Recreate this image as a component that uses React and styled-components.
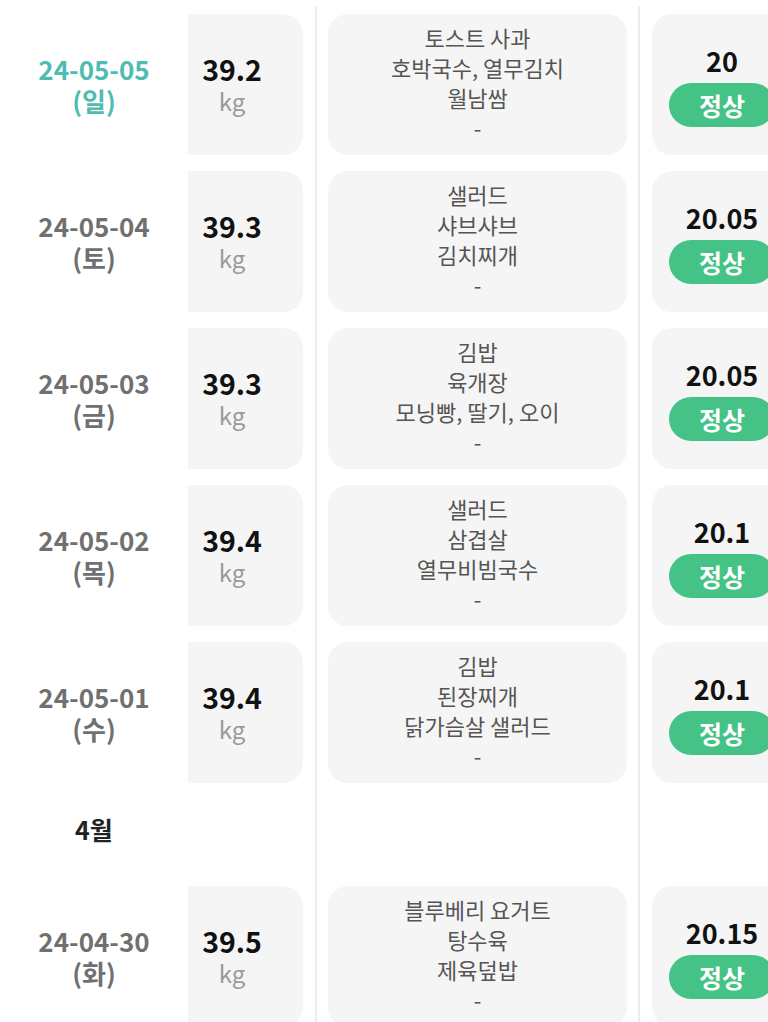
import React from "react";
import styled, { createGlobalStyle } from "styled-components";

const GlobalStyle = createGlobalStyle`
  html, body {
    margin: 0;
    padding: 0;
    background: #ffffff;
    overflow: hidden;
  }
  body {
    font-family: "Noto Sans CJK KR", "Noto Sans", sans-serif;
  }
`;

const List = styled.div`
  width: 792px;
  padding-top: 6px;
  display: flex;
  flex-direction: column;
`;

const Row = styled.div`
  display: grid;
  grid-template-columns: 188px 115px 12px 2px 11px 299px 11px 2px 12px 140px;
  grid-template-rows: 100%;
  height: ${(p) => p.$height || 157}px;
  & > * {
    grid-row: 1;
  }
`;

const Divider = styled.div`
  grid-column: ${(p) => p.$col};
  background: #ededed;
`;

const DateCell = styled.div`
  grid-column: 1;
  display: flex;
  flex-direction: column;
  align-items: center;
  justify-content: center;
  font-size: 26px;
  font-weight: 700;
  line-height: 32px;
  color: ${(p) => (p.$today ? "#4fbcb3" : "#707070")};
`;

const MonthLabel = styled.div`
  grid-column: 1;
  display: flex;
  align-items: center;
  justify-content: center;
  padding-bottom: 12px;
  font-size: 25px;
  font-weight: 700;
  color: #222222;
`;

const Card = styled.div`
  grid-column: ${(p) => p.$col};
  margin: 8px 0;
  background: #f5f5f5;
  border-radius: ${(p) => (p.$flatLeft ? "0 20px 20px 0" : "20px")};
  display: flex;
  flex-direction: column;
  align-items: center;
  justify-content: center;
`;

const WeightCard = styled(Card)`
  padding-right: 27px;
`;

const MealCard = styled(Card)`
  padding-bottom: 6px;
`;

const WeightValue = styled.div`
  font-size: 28.5px;
  font-weight: 700;
  line-height: 32px;
  color: #111111;
`;

const Unit = styled.div`
  font-size: 24px;
  line-height: 32px;
  color: #9a9a9a;
`;

const MealLine = styled.div`
  font-size: 22px;
  line-height: 30px;
  color: #555555;
  white-space: nowrap;
`;

const BmiValue = styled.div`
  font-size: 27px;
  font-weight: 700;
  line-height: 36px;
  color: #111111;
  margin-bottom: 4px;
`;

const Badge = styled.div`
  width: 106px;
  height: 44px;
  border-radius: 22px;
  background: #45c386;
  color: #ffffff;
  font-size: 25px;
  font-weight: 700;
  display: flex;
  align-items: center;
  justify-content: center;
`;

const records = [
  { date: "24-05-05", day: "일", weight: "39.2", meals: ["토스트 사과", "호박국수, 열무김치", "월남쌈", "-"], bmi: "20", today: true },
  { date: "24-05-04", day: "토", weight: "39.3", meals: ["샐러드", "샤브샤브", "김치찌개", "-"], bmi: "20.05" },
  { date: "24-05-03", day: "금", weight: "39.3", meals: ["김밥", "육개장", "모닝빵, 딸기, 오이", "-"], bmi: "20.05" },
  { date: "24-05-02", day: "목", weight: "39.4", meals: ["샐러드", "삼겹살", "열무비빔국수", "-"], bmi: "20.1" },
  { date: "24-05-01", day: "수", weight: "39.4", meals: ["김밥", "된장찌개", "닭가슴살 샐러드", "-"], bmi: "20.1" },
  { month: "4월" },
  { date: "24-04-30", day: "화", weight: "39.5", meals: ["블루베리 요거트", "탕수육", "제육덮밥", "-"], bmi: "20.15" },
];

const Dividers = () => (
  <>
    <Divider $col={4} />
    <Divider $col={8} />
  </>
);

const RecordRow = ({ r }) => (
  <Row>
    <DateCell $today={r.today}>
      <div>{r.date}</div>
      <div>({r.day})</div>
    </DateCell>
    <WeightCard $col={2} $flatLeft>
      <WeightValue>{r.weight}</WeightValue>
      <Unit>kg</Unit>
    </WeightCard>
    <Dividers />
    <MealCard $col={6}>
      {r.meals.map((m, i) => (
        <MealLine key={i}>{m}</MealLine>
      ))}
    </MealCard>
    <Card $col={10}>
      <BmiValue>{r.bmi}</BmiValue>
      <Badge>정상</Badge>
    </Card>
  </Row>
);

export default function App() {
  return (
    <>
      <GlobalStyle />
      <List>
        {records.map((r, i) =>
          r.month ? (
            <Row key={i} $height={87}>
              <MonthLabel>{r.month}</MonthLabel>
              <Dividers />
            </Row>
          ) : (
            <RecordRow key={i} r={r} />
          )
        )}
      </List>
    </>
  );
}
